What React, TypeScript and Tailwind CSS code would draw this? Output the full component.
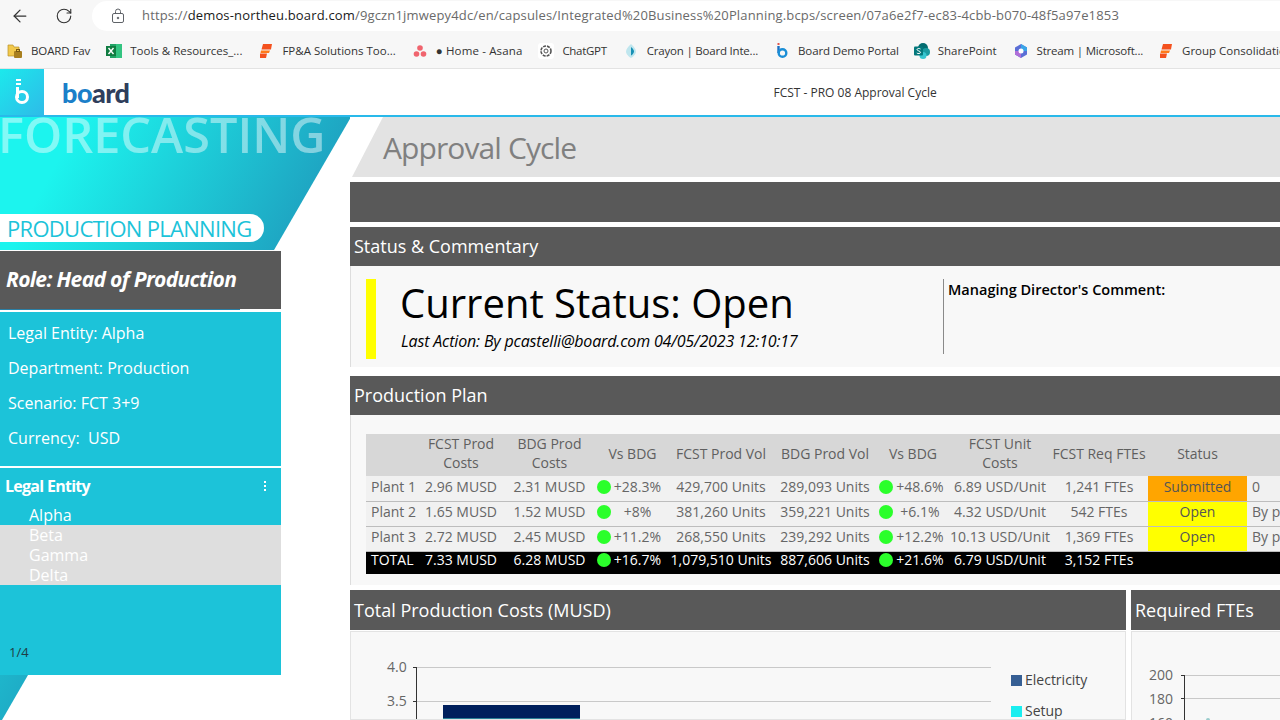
import { ArrowLeft, RotateCw } from "lucide-react";

const F = "font-['Open_Sans',sans-serif]";

function Folder() {
  return (
    <svg width="16" height="16" viewBox="0 0 16 16">
      <path d="M1 2h5l1 2h5v9H1z" fill="#f2c94c" stroke="#b8902a" strokeWidth="0.7" />
      <rect x="7" y="8" width="8" height="7" rx="1" fill="#a87f1e" />
      <rect x="9.500" y="6.500" width="3" height="2" fill="none" stroke="#7a5a10" />
    </svg>
  );
}
function Excel() {
  return (
    <svg width="16" height="16" viewBox="0 0 16 16">
      <rect x="4" y="1" width="12" height="14" fill="#21a366" />
      <rect x="10" y="1" width="6" height="14" fill="#33c481" />
      <rect x="0" y="3" width="10" height="10" fill="#107c41" />
      <path d="M2.500 5l5 6M7.500 5l-5 6" stroke="#fff" strokeWidth="1.400" />
    </svg>
  );
}
function Crayon() {
  return (
    <svg width="16" height="16" viewBox="0 0 16 16">
      <path d="M5 1h9l-1 5.500H3.500z" fill="#f4511e" />
      <path d="M3 7.500h9L11 10H2.500z" fill="#ff7a1a" />
      <path d="M2 10.500h7L8 15H2z" fill="#f4511e" />
    </svg>
  );
}
function Asana() {
  return (
    <svg width="16" height="16" viewBox="0 0 16 16">
      <circle cx="8" cy="5" r="2.800" fill="#f0646e" />
      <circle cx="4.500" cy="11" r="2.800" fill="#f0646e" />
      <circle cx="11.500" cy="11" r="2.800" fill="#f0646e" />
    </svg>
  );
}
function Gpt() {
  return (
    <svg width="16" height="16" viewBox="0 0 16 16">
      <rect width="16" height="16" rx="3" fill="#fff" />
      <circle cx="8" cy="8" r="5" fill="none" stroke="#555" strokeWidth="1.600" strokeDasharray="3 1" />
      <circle cx="8" cy="8" r="2" fill="none" stroke="#555" strokeWidth="1" />
    </svg>
  );
}
function Drop() {
  return (
    <svg width="16" height="16" viewBox="0 0 16 16">
      <path d="M8 1c3 3 5 5 5 7.500S10 14 8 15C6 14 3 11 3 8.500S5 4 8 1z" fill="#bfe6ee" />
      <path d="M8 4c2 2 3 3 3 4.500S9 12 8 12.500z" fill="#1790b5" />
    </svg>
  );
}
function BoardB() {
  return (
    <svg width="16" height="16" viewBox="0 0 16 16">
      <rect x="3.500" y="0" width="2" height="2" fill="#e2574c" />
      <path d="M4.500 3v7" stroke="#1b6fc2" strokeWidth="2.400" />
      <circle cx="8.500" cy="10" r="3.800" fill="none" stroke="#1b8ed6" strokeWidth="2.400" />
    </svg>
  );
}
function Share() {
  return (
    <svg width="16" height="16" viewBox="0 0 16 16">
      <circle cx="9" cy="5" r="5" fill="#036c70" />
      <circle cx="12" cy="9" r="4" fill="#1a9ba1" />
      <circle cx="9" cy="12.500" r="3.500" fill="#37c6d0" />
      <rect x="0" y="3.500" width="9" height="9" rx="1" fill="#03787c" />
      <path d="M6.500 6C5 5 3 5.500 3 6.700s3.500 1.200 3.500 2.600S4 11 2.800 10" fill="none" stroke="#fff" strokeWidth="1" />
    </svg>
  );
}
function Stream() {
  return (
    <svg width="16" height="16" viewBox="0 0 16 16">
      <path d="M8 1l6 3.500v7L8 15l-6-3.500v-7z" fill="#5b6fd6" />
      <path d="M8 1l6 3.500v3.500H8z" fill="#3aa5e8" />
      <path d="M8 15l-6-3.500V8h6z" fill="#b06fd8" />
      <circle cx="8" cy="8" r="2.500" fill="#fff" />
    </svg>
  );
}

const bookmarks: [React.ReactNode, string, string, string][] = [
  [<Folder />, "BOARD Fav", "tracking-[-0.1px]", ""],
  [<Excel />, "Tools & Resources_...", "", ""],
  [<Crayon />, "FP&A Solutions Too...", "", ""],
  [<Asana />, "● Home - Asana", "tracking-[0.14px]", ""],
  [<Gpt />, "ChatGPT", "tracking-[-0.3px]", ""],
  [<Drop />, "Crayon | Board Inte...", "tracking-[-0.2px]", ""],
  [<BoardB />, "Board Demo Portal", "tracking-[-0.12px]", ""],
  [<Share />, "SharePoint", "", "-ml-[1px]"],
  [<Stream />, "Stream | Microsoft...", "tracking-[-0.2px]", ""],
  [<Crayon />, "Group Consolidation", "", "-ml-[1px]"],
];

function Dot({ v, second }: { v: string; second: boolean }) {
  return (
    <div className={`flex items-center ${second ? "pl-[3px] pr-[3px]" : "pr-[4px]"}`}>
      <span className="mt-[1px] h-[14px] w-[14px] shrink-0 rounded-full bg-[#2bff2b]" />
      <span className="flex-1 text-center">{v}</span>
    </div>
  );
}

type Row = { n: string; c: string[]; s?: string; sc?: string; x?: string; pb: string };
const rows: Row[] = [
  { n: "Plant 1", c: ["2.96 MUSD", "2.31 MUSD", "+28.3%", "429,700 Units", "289,093 Units", "+48.6%", "6.89 USD/Unit", "1,241 FTEs"], s: "Submitted", sc: "bg-[#ffa500]", x: "0", pb: "pb-[3px]" },
  { n: "Plant 2", c: ["1.65 MUSD", "1.52 MUSD", "+8%", "381,260 Units", "359,221 Units", "+6.1%", "4.32 USD/Unit", "542 FTEs"], s: "Open", sc: "bg-[#ffff00]", x: "By pcastelli@board.com", pb: "pb-[5px]" },
  { n: "Plant 3", c: ["2.72 MUSD", "2.45 MUSD", "+11.2%", "268,550 Units", "239,292 Units", "+12.2%", "10.13 USD/Unit", "1,369 FTEs"], s: "Open", sc: "bg-[#ffff00]", x: "By pcastelli@board.com", pb: "pb-[5px]" },
];
const total: string[] = ["7.33 MUSD", "6.28 MUSD", "+16.7%", "1,079,510 Units", "887,606 Units", "+21.6%", "6.79 USD/Unit", "3,152 FTEs"];
const widths = [54, 82, 95, 71, 106, 102, 74, 100, 98, 99, 160];

function Cells({ c, pb }: { c: string[]; pb: string }) {
  return (
    <>
      {c.map((v, i) => (
        <td key={i} className={`whitespace-nowrap p-0 text-center ${pb}`}>
          {i === 2 || i === 5 ? <Dot v={v} second={i === 5} /> : v}
        </td>
      ))}
    </>
  );
}

function SectionHead({ t, h = "h-[39px]" }: { t: string; h?: string }) {
  return <div className={`${h} flex items-center bg-[#595959] pl-1 text-[18px] text-white`}>{t}</div>;
}

export default function App() {
  return (
    <div className={`${F} flex h-[720px] w-[1280px] flex-col overflow-hidden bg-white`}>
      {/* Browser toolbar */}
      <div className="flex h-[32px] shrink-0 items-center bg-[#f7f7f7]">
        <ArrowLeft className="ml-[10px] h-[20px] w-[20px] text-[#333]" strokeWidth={1.5} />
        <RotateCw className="ml-[25px] h-[18px] w-[18px] text-[#333]" strokeWidth={1.5} />
        <div className="ml-[19px] flex h-[30px] flex-1 items-center rounded-l-full bg-white pl-[19px]">
          <svg width="14" height="16" viewBox="0 0 14 16" fill="none" stroke="#5f6368" strokeWidth="1">
            <rect x="1.500" y="5.500" width="11" height="9" rx="1.500" />
            <path d="M4.500 5.500V3.500a2.500 2.500 0 015 0v2" />
            <circle cx="7" cy="10" r="0.800" fill="#5f6368" />
          </svg>
          <div className="ml-[17px] whitespace-nowrap text-[13px] tracking-[0.16px] text-[#6a6a6a]">
            https://<span className="text-[#1a1a1a]">demos-northeu.board.com</span>/9gczn1jmwepy4dc/en/capsules/Integrated%20Business%20Planning.bcps/screen/07a6e2f7-ec83-4cbb-b070-48f5a97e1853
          </div>
        </div>
      </div>
      {/* Bookmarks */}
      <div className="flex h-[37px] shrink-0 items-center overflow-hidden whitespace-nowrap border-b border-[#e3e3e3] bg-[#f7f7f7] pl-[7px] pt-[2px] text-[11.500px] text-[#333]">
        {bookmarks.map(([ic, t, tr, shift], i) => (
          <div key={i} className={`mr-[16px] flex shrink-0 items-center gap-[8px] last:mr-0 ${shift}`}>
            {ic}
            <span className={tr}>{t}</span>
          </div>
        ))}
      </div>
      {/* App header */}
      <div className="flex h-[48px] shrink-0 items-center border-b-2 border-[#29b9ea] bg-white">
        <div className="flex h-full w-[44px] items-center justify-center bg-[linear-gradient(135deg,#1ce9ec,#2ebbe8)]">
          <svg width="16" height="26" viewBox="0 0 16 26">
            <rect x="2" y="0" width="5" height="2" fill="#fff" />
            <rect x="2" y="4" width="5" height="2" fill="#fff" />
            <path d="M3.500 8v11" stroke="#fff" strokeWidth="3" />
            <circle cx="8" cy="18" r="5.500" fill="none" stroke="#fff" strokeWidth="3" />
          </svg>
        </div>
        <div className="ml-[18px] flex items-end font-['Lato',sans-serif] text-[27px] font-black leading-none tracking-[-0.02em] text-[#2f3e5c]">
          <span className="text-[#1b7fc9]">bo</span>ard
        </div>
        <div className="ml-[644px] mt-[2px] text-[12px] text-[#333]">FCST - PRO 08 Approval Cycle</div>
      </div>
      {/* Main */}
      <div className="flex min-h-0 flex-1">
        {/* Sidebar */}
        <div className="relative h-full w-[350px] shrink-0 overflow-hidden">
          <div className="absolute inset-0 bg-[linear-gradient(118deg,#1cf4ee_12%,#1f8fb6_64%)] [clip-path:polygon(0_0,351px_0,2px_100%,0_100%)]" />
          <div className="relative flex h-full w-[281px] flex-col">
            <div className="-ml-[2px] h-[97px] w-[350px] shrink-0 whitespace-nowrap text-[48.600px] font-semibold leading-[35px] text-white/45">
              FORECASTING
            </div>
            <div className="flex h-[28px] w-[264px] shrink-0 items-center whitespace-nowrap rounded-r-full bg-white pl-[7px] text-[22px] font-medium tracking-[-0.032em] text-[#1cc3d9]">
              PRODUCTION PLANNING
            </div>
            <div className="h-[8px] shrink-0" />
            <div className="flex h-[59px] shrink-0 items-center border-t border-white bg-[#595959] pl-[6px] text-[21px] font-bold italic tracking-[-0.031em] text-white">
              Role: Head of Production
            </div>
            <div className="h-[1px] w-[240px] shrink-0 bg-[#2a7fa5]" />
            <div className="h-[2px] shrink-0 bg-white" />
            <div className="flex h-[154px] shrink-0 flex-col gap-[15px] bg-[#1cc3d9] pl-[8px] pt-[11px] text-[16px] leading-[20px] text-white">
              <div>Legal Entity: Alpha</div>
              <div>Department: Production</div>
              <div>Scenario: FCT 3+9</div>
              <div className="whitespace-pre">Currency:  USD</div>
            </div>
            <div className="h-[2px] shrink-0 bg-white" />
            <div className="flex h-[207px] shrink-0 flex-col bg-[#1cc3d9] text-[16px] text-white">
              <div className="flex h-[37px] shrink-0 items-center justify-between pb-[2px] pl-[5px] pr-[15px] font-bold tracking-[-0.045em]">
                <span>Legal Entity</span>
                <span className="flex flex-col gap-[2px]">
                  <i className="block h-[2px] w-[2px] bg-white" />
                  <i className="block h-[2px] w-[2px] bg-white" />
                  <i className="block h-[2px] w-[2px] bg-white" />
                </span>
              </div>
              <div className="h-[20px] shrink-0 pl-[29px] leading-[20px]">Alpha</div>
              <div className="flex h-[60px] shrink-0 flex-col bg-[#dedede] pl-[29px] leading-[20px]">
                <div>Beta</div>
                <div>Gamma</div>
                <div>Delta</div>
              </div>
              <div className="flex-1 pl-[9px] pt-[58px] text-[13px] leading-[18px] text-[#1f3d44]">1/4</div>
            </div>
          </div>
        </div>
        {/* Content */}
        <div className="flex min-w-0 flex-1 flex-col overflow-hidden">
          <div className="flex h-[60px] shrink-0 items-center bg-[#e3e3e3] pl-[33px] text-[30px] font-medium tracking-[-0.03em] text-[#808080] [clip-path:polygon(33px_0,100%_0,100%_100%,2px_100%)]">
            Approval Cycle
          </div>
          <div className="mt-[5px] h-[40px] shrink-0 bg-[#595959]" />
          <div className="mt-[5px] shrink-0">
            <SectionHead t="Status & Commentary" />
          </div>
          <div className="flex h-[101px] shrink-0 border-l border-[#dddddd] bg-[#f8f8f8] pl-[15px] pt-[13px]">
            <div className="h-[80px] w-[10px] shrink-0 bg-[#ffff00]" />
            <div className="ml-[25px] w-[542px] shrink-0 text-black">
              <div className="-ml-px h-[45px] text-[40px] leading-[48px]">Current Status: Open</div>
              <div className="mt-[6px] text-[16px] italic leading-[22px] tracking-[-0.01em]">Last Action: By pcastelli@board.com 04/05/2023 12:10:17</div>
            </div>
            <div className="h-[75px] border-l border-[#8a8a8a] pl-[4px] text-[14.500px] font-semibold leading-[22px] text-black">
              Managing Director's Comment:
            </div>
          </div>
          <div className="mt-[9px] shrink-0">
            <SectionHead t="Production Plan" />
          </div>
          <div className="h-[170px] shrink-0 border-l border-[#dddddd] bg-[#f8f8f8] pl-[15px] pt-[19px]">
            <table className="w-[1041px] table-fixed border-collapse text-[14px] leading-[19px] text-[#666]">
              <colgroup>
                {widths.map((w, i) => (
                  <col key={i} style={{ width: w }} />
                ))}
              </colgroup>
              <thead>
                <tr className="h-[42px] bg-[#d7d7d7] text-[#5f5f5f]">
                  {["", "FCST Prod Costs", "BDG Prod Costs", "Vs BDG", "FCST Prod Vol", "BDG Prod Vol", "Vs BDG", "FCST Unit Costs", "FCST Req FTEs", "Status", ""].map((h, i) => (
                    <th key={i} className="px-[4px] pb-[4px] pt-0 text-center font-normal leading-[19px] first:px-0 [&:nth-child(5)]:px-0 [&:nth-child(6)]:px-0 [&:nth-child(9)]:px-0">
                      {h}
                    </th>
                  ))}
                </tr>
              </thead>
              <tbody>
                {rows.map((r) => (
                  <tr key={r.n} className="h-[25px] border-b border-[#bdbdbd] bg-[#f1f1f1]">
                    <td className={`whitespace-nowrap p-0 pl-[5px] ${r.pb}`}>{r.n}</td>
                    <Cells c={r.c} pb={r.pb} />
                    <td className={`p-0 text-center text-[#555] ${r.pb} ${r.sc}`}>{r.s}</td>
                    <td className={`whitespace-nowrap p-0 pl-[5px] ${r.pb}`}>{r.x}</td>
                  </tr>
                ))}
                <tr className="h-[23px] bg-black font-medium leading-[16px] text-white">
                  <td className="p-0 pb-[6px] pl-[5px]">TOTAL</td>
                  <Cells c={total} pb="pb-[6px]" />
                  <td className="p-0" />
                  <td className="p-0" />
                </tr>
              </tbody>
            </table>
          </div>
          <div className="mt-[5px] flex min-h-0 flex-1 gap-[5px]">
            <div className="flex w-[776px] shrink-0 flex-col">
              <SectionHead t="Total Production Costs (MUSD)" h="h-[40px]" />
              <div className="mt-[1px] flex-1 overflow-hidden border border-[#e3e3e3] bg-[#f8f8f8]">
                <svg width="774" height="90" viewBox="0 1 774 90" className="block">
                  <g stroke="#c9c9c9" strokeWidth="1">
                    <path d="M65 36.500H640M65 70.500H640" />
                  </g>
                  <path d="M65.500 36v60" stroke="#333" />
                  <path d="M62 36.500h4M62 70.500h4" stroke="#333" />
                  <rect x="92" y="74" width="137" height="13" fill="#001f5c" />
                  <rect x="92" y="87" width="137" height="5" fill="#2a7f96" />
                  <g fontFamily="'Open Sans',sans-serif" fontSize="14" fill="#666">
                    <text x="36" y="41">4.0</text>
                    <text x="36" y="75">3.5</text>
                  </g>
                  <rect x="660" y="44" width="11" height="11" fill="#365f94" />
                  <rect x="660" y="75" width="11" height="11" fill="#1beef0" />
                  <g fontFamily="'Open Sans',sans-serif" fontSize="14" fill="#444">
                    <text x="674" y="54">Electricity</text>
                    <text x="674" y="85">Setup</text>
                  </g>
                </svg>
              </div>
            </div>
            <div className="flex min-w-0 flex-1 flex-col">
              <SectionHead t="Required FTEs" h="h-[40px]" />
              <div className="mt-[1px] flex-1 overflow-hidden border-l border-t border-[#e3e3e3] bg-[#f8f8f8]">
                <svg width="150" height="90" viewBox="0 0 150 90" className="block">
                  <path d="M52 43.500H150M52 66.500H150M52 90.500H150" stroke="#c9c9c9" />
                  <path d="M52.500 43v47" stroke="#333" />
                  <path d="M49 43.500h4M49 66.500h4" stroke="#333" />
                  <circle cx="76" cy="88" r="2" fill="#9cc" />
                  <g fontFamily="'Open Sans',sans-serif" fontSize="14" fill="#666">
                    <text x="17" y="48">200</text>
                    <text x="17" y="72">180</text>
                    <text x="17" y="96">160</text>
                  </g>
                </svg>
              </div>
            </div>
          </div>
        </div>
      </div>
    </div>
  );
}
